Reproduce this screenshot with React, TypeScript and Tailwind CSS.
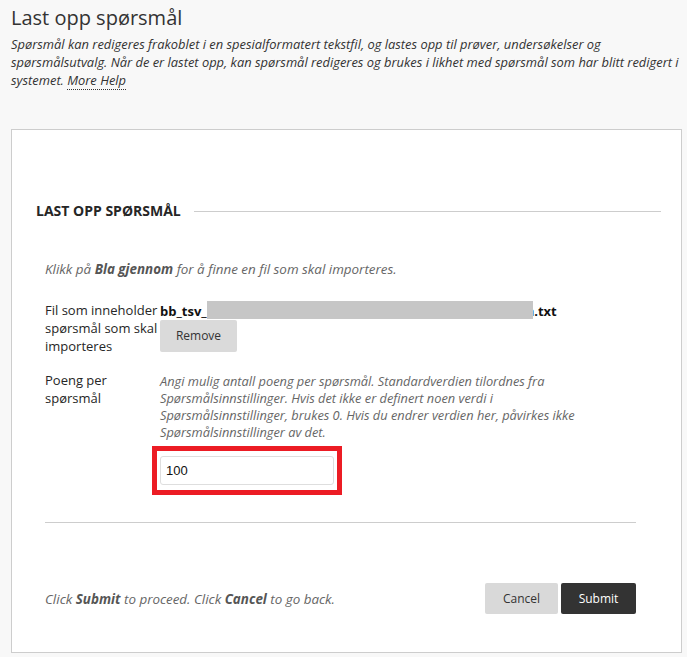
import React from 'react';

const App: React.FC = () => {
  return (
    <div className="min-h-screen bg-[#f8f8f8] font-['Open_Sans',sans-serif] text-[#262626]">
      {/* Page header */}
      <div className="pl-[11px] pr-[4px] pt-[4px]">
        <h1 className="text-[20px] leading-[28px] font-normal text-[#333]">Last opp spørsmål</h1>
        <p className="mt-[3px] text-[12.9px] leading-[18px] italic text-[#333]">
          Spørsmål kan redigeres frakoblet i en spesialformatert tekstfil, og lastes opp til prøver, undersøkelser og
          spørsmålsutvalg. Når de er lastet opp, kan spørsmål redigeres og brukes i likhet med spørsmål som har blitt redigert i
          systemet.{' '}
          <a className="border-b border-dotted border-[#333] text-[#333]">More Help</a>
        </p>
      </div>

      {/* Panel */}
      <div className="ml-[11px] mr-[5px] mt-[40px] border border-[#cdcdcd] bg-white pt-[72px] pb-[38px]">
        {/* Section header */}
        <div className="flex items-center pl-[24px] pr-[20px]">
          <h2 className="text-[14px] leading-[18px] font-bold uppercase text-[#262626]">Last opp spørsmål</h2>
          <div className="ml-[13px] h-px flex-1 bg-[#cdcdcd]"></div>
        </div>

        <div className="pl-[33px] pr-[45px]">
          <p className="mt-[40px] text-[13.4px] leading-[18px] italic text-[#666]">
            Klikk på <b className="font-bold text-[#555]">Bla gjennom</b> for å finne en fil som skal importeres.
          </p>

          {/* File row */}
          <div className="mt-[23px] flex text-[13px] leading-[18px]">
            <div className="w-[115px] shrink-0 text-[#262626]">
              Fil som inneholder spørsmål som skal importeres
            </div>
            <div className="flex flex-col items-start">
              <div className="whitespace-nowrap font-bold text-[#111]">
                bb_tsv_
                <span className="relative -mb-[3px] -mr-[7px] inline-block h-[18px] w-[326px] bg-[#c6c6c6] align-baseline"></span>
                n.txt
              </div>
              <button className="h-[32px] w-[77px] rounded-[2px] bg-[#dadada] text-[12px] text-[#333]">Remove</button>
            </div>
          </div>

          {/* Points row */}
          <div className="mt-[16px] flex text-[13px] leading-[18px]">
            <div className="w-[115px] shrink-0 text-[#262626]">Poeng per spørsmål</div>
            <div className="flex flex-col items-start">
              <p className="mt-[2px] max-w-[440px] text-[12.8px] leading-[17px] italic text-[#666]">
                Angi mulig antall poeng per spørsmål. Standardverdien tilordnes fra Spørsmålsinnstillinger. Hvis det ikke er
                definert noen verdi i Spørsmålsinnstillinger, brukes 0. Hvis du endrer verdien her, påvirkes ikke
                Spørsmålsinnstillinger av det.
              </p>
              <div className="-ml-[8px] mt-[5px] border-[5px] border-[#ec1c24] px-[3px] py-[5px]">
                <input
                  type="text"
                  defaultValue="100"
                  className="h-[29px] w-[174px] rounded-[3px] border border-[#dedede] bg-white px-[5px] font-['Liberation_Sans',sans-serif] text-[13px] text-[#111] outline-none"
                />
              </div>
            </div>
          </div>

          <div className="mt-[27px] h-px bg-[#cdcdcd]"></div>

          {/* Footer */}
          <div className="mt-[60px] flex items-center justify-between">
            <p className="text-[13.4px] leading-[18px] italic text-[#666]">
              Click <b className="font-bold text-[#555]">Submit</b> to proceed. Click <b className="font-bold text-[#555]">Cancel</b> to go back.
            </p>
            <div className="flex gap-[3px]">
              <button className="h-[31px] w-[73px] rounded-[2px] bg-[#d9d9d9] text-[12px] text-[#333]">Cancel</button>
              <button className="h-[31px] w-[75px] rounded-[2px] bg-[#333] text-[12px] text-white">Submit</button>
            </div>
          </div>
        </div>
      </div>
    </div>
  );
};

export default App;
